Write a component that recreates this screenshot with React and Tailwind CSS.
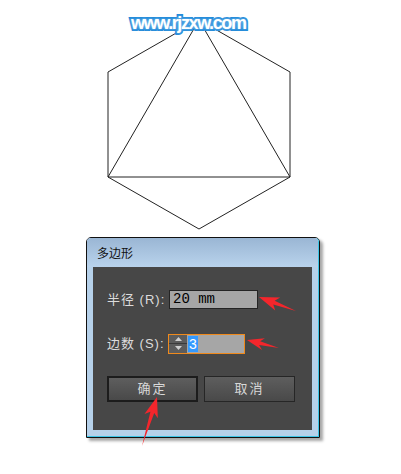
import React from "react";

const cjk = { fontFamily: '"Liberation Sans", "Noto Sans CJK SC", sans-serif' };

// tapered red arrow: tip -> tail
function arrowPoints(tip, tail, head = 18, half = 7, neck = 2.5) {
  const dx = tail[0] - tip[0];
  const dy = tail[1] - tip[1];
  const len = Math.hypot(dx, dy);
  const ux = dx / len;
  const uy = dy / len;
  const nx = -uy;
  const ny = ux;
  const bx = tip[0] + ux * head;
  const by = tip[1] + uy * head;
  const ix = tip[0] + ux * (head - 4);
  const iy = tip[1] + uy * (head - 4);
  const pts = [
    tip,
    [bx + nx * half, by + ny * half],
    [ix + nx * neck, iy + ny * neck],
    tail,
    [ix - nx * neck, iy - ny * neck],
    [bx - nx * half, by - ny * half],
  ];
  return pts.map((p) => p.join(",")).join(" ");
}

function Label({ children }) {
  return (
    <div className="w-[61px] text-[13px] text-[#dcdcdc] tracking-[1px]" style={cjk}>
      {children}
    </div>
  );
}

function Button({ children, primary }) {
  return (
    <div
      className={
        "flex h-[26px] w-[91px] items-center justify-center bg-gradient-to-b from-[#5e5e5e] to-[#494949] text-[13px] tracking-[2px] text-[#d8d8d8] " +
        (primary ? "border-2 border-[#1c1c1c]" : "border border-[#262626]")
      }
      style={cjk}
    >
      {children}
    </div>
  );
}

export default function App() {
  return (
    <div className="relative h-[474px] w-[401px] overflow-hidden bg-white">
      <div className="relative h-[237px]">
        <svg width="401" height="237" className="block">
          <g fill="none" stroke="#222" strokeWidth="1">
            <polygon points="199,20 290,72 290,177 199,229 108,177 108,72" />
            <polygon points="199,20 290,177 108,177" />
          </g>
        </svg>
        <div
          className="absolute left-[131px] top-[12px] text-[18px] font-bold leading-[22px] tracking-[-1.4px] text-white [-webkit-text-stroke:4px_#1f88d8] [paint-order:stroke_fill] [text-shadow:0_0_3px_#9cd0f4]"
          style={{ fontFamily: '"Liberation Sans", Arial, sans-serif' }}
        >
          www.rjzxw.com
        </div>
      </div>

      <div className="ml-[86px] w-[234px] rounded-t-[5px] border border-[#111] shadow-[3px_3px_3px_rgba(0,0,0,0.35)]">
        <div className="rounded-t-[4px] border-r border-b border-[#3cc4e6] bg-[#b6d1ea]">
          <div className="flex h-[29px] items-center rounded-t-[4px] bg-gradient-to-b from-[#9ab6d4] to-[#b9d3ec] pl-[10px] pt-[2px] text-[12px] text-[#111]" style={cjk}>
            多边形
          </div>
          <div className="px-[6px] pb-[6px]">
            <div className="flex h-[163px] flex-col bg-[#474747] px-[14px] pt-[23px]">
              <div className="flex items-center">
                <Label>半径 (R):</Label>
                <div
                  className="ml-[1px] flex h-[19px] w-[89px] items-center border border-[#242424] bg-[#a6a6a6] pl-[3px] text-[14px] text-black"
                  style={{ fontFamily: '"Liberation Mono", monospace' }}
                >
                  20 mm
                </div>
              </div>
              <div className="mt-[24px] flex items-center">
                <Label>边数 (S):</Label>
                <div className="flex h-[20px] w-[77px] border border-[#f08a1c]">
                  <div className="flex w-[18px] flex-col bg-[#5c5c5c]">
                    <div className="flex flex-1 items-center justify-center border-b border-[#3a3a3a]">
                      <svg width="7" height="4"><polygon points="0,4 7,4 3.5,0" fill="#d0d0d0" /></svg>
                    </div>
                    <div className="flex flex-1 items-center justify-center">
                      <svg width="7" height="4"><polygon points="0,0 7,0 3.5,4" fill="#d0d0d0" /></svg>
                    </div>
                  </div>
                  <div className="flex flex-1 items-center bg-[#a6a6a6] pl-[1px]">
                    <span className="bg-[#3399ff] px-[1px] text-[14px] leading-[16px] text-white" style={{ fontFamily: '"Liberation Sans", sans-serif' }}>
                      3
                    </span>
                  </div>
                </div>
              </div>
              <div className="mt-[22px] flex gap-[6px]">
                <Button primary>确定</Button>
                <Button>取消</Button>
              </div>
            </div>
          </div>
        </div>
      </div>

      <svg width="401" height="474" className="pointer-events-none absolute inset-0">
        <g fill="#f4262c">
          <polygon points={arrowPoints([259, 297], [296, 311], 20, 7, 2)} />
          <polygon points={arrowPoints([247, 340], [279, 348], 17, 6, 2)} />
          <polygon points={arrowPoints([157, 397], [142, 446], 20, 7, 2)} />
        </g>
      </svg>
    </div>
  );
}
